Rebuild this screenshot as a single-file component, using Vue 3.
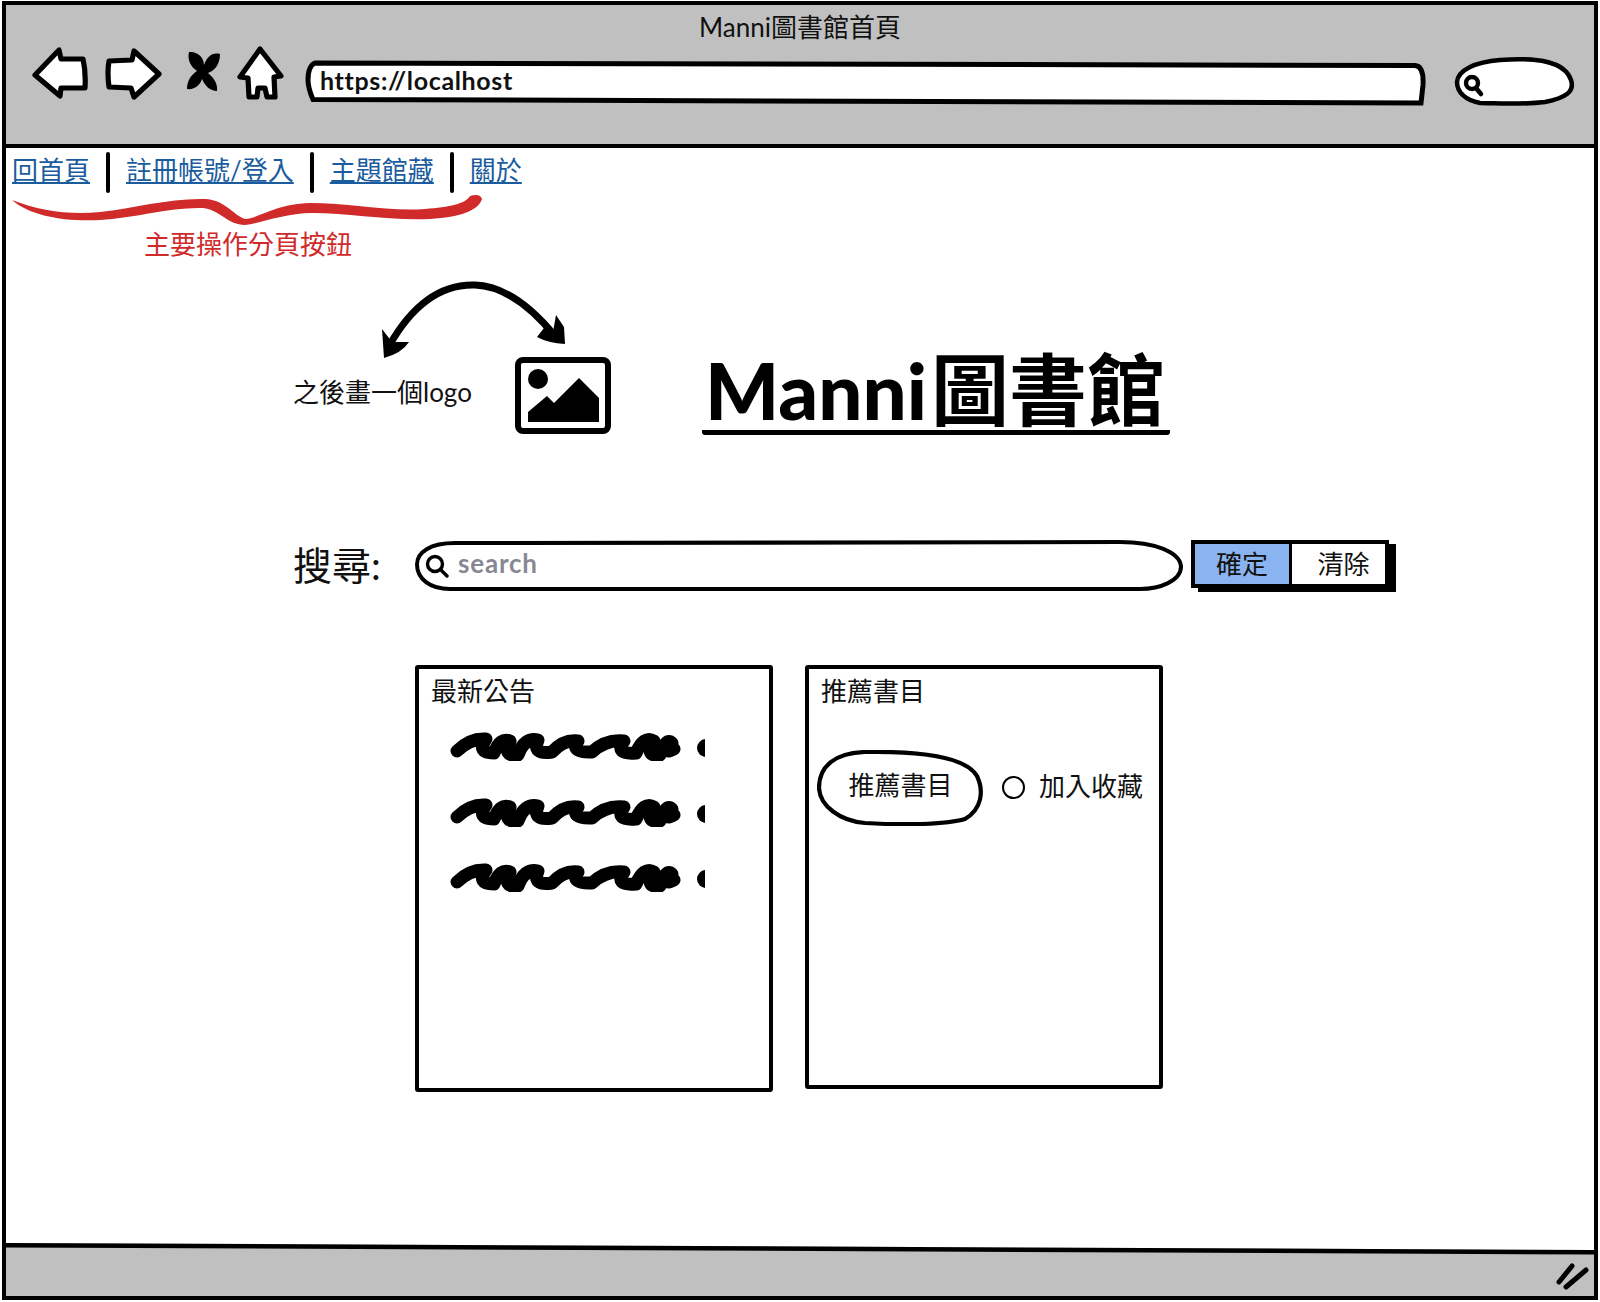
<template>
  <div class="frame">
    <header class="chrome">
      <div class="win-title">Manni圖書館首頁</div>
      <div class="toolbar">
        <svg class="ic-back" width="57" height="63" viewBox="31 45 57 63">
          <path d="M59 50 L35 75 L60 96 L61 88 L85 88 Q86 72 83 59 L61 59 Z" fill="#fff" stroke="#000" stroke-width="5.2" stroke-linejoin="round" />
        </svg>
        <svg class="ic-fwd" width="58" height="63" viewBox="105 45 58 63">
          <path d="M134 51 L159 74 L134 97 L131 88 L109 87 Q107 72 109 61 L132 60 Z" fill="#fff" stroke="#000" stroke-width="5.2" stroke-linejoin="round" />
        </svg>
        <svg class="ic-stop" width="34" height="63" viewBox="186 45 34 63">
          <path d="M189 52 C198 51 204 58 204 65 C207 57 212 52 220 54 C220 65 214 71 208 73 C214 78 218 84 217 91 C210 91 205 86 202 79 C200 85 195 90 187 89 C187 81 191 75 197 71 C191 67 187 60 189 52 Z" fill="#000" />
        </svg>
        <svg class="ic-home" width="48" height="63" viewBox="236 45 48 63">
          <path d="M260 49 L240 77 L248 78 L249 97 L257 97 L258 88 L265 88 L267 97 L275 97 L274 77 L281 76 Z" fill="#fff" stroke="#000" stroke-width="5.2" stroke-linejoin="round" />
        </svg>
        <div class="url">
          <svg class="sketch" viewBox="305 45 1122 63" preserveAspectRatio="none">
            <path d="M315 63 L1415 65.5 Q1424 66 1423 85 L1421 103 L313 99.5 Q308 88 308 80 Q308 66 315 63 Z" fill="#fff" stroke="#000" stroke-width="5" />
          </svg>
          <span class="url-text">https://localhost</span>
        </div>
        <svg class="ic-mini" width="123" height="63" viewBox="1453 45 123 63">
          <path d="M1500 60 C1540 57 1565 62 1571 80 C1575 92 1565 98 1545 102 C1520 105 1495 103 1480 103 C1465 100 1457 92 1457 82 C1458 70 1475 62 1500 60 Z" fill="#fff" stroke="#000" stroke-width="4.5" />
          <circle cx="1472" cy="83" r="6" fill="none" stroke="#000" stroke-width="4.4" />
          <path d="M1476 88 L1481 94" stroke="#000" stroke-width="4.6" stroke-linecap="round" />
        </svg>
      </div>
    </header>

    <main class="content">
      <nav class="nav">
        <template v-for="(item, i) in navItems" :key="item">
          <i v-if="i" class="sep"></i>
          <a href="#" class="nav-link" @click.prevent>{{ item }}</a>
        </template>
      </nav>

      <svg class="brace" width="475" height="32" viewBox="10 193 475 32">
        <path d="M12 200 C40 211 70 215 100 212 C135 208 170 198 205 199 C225 200 232 214 245 219 C260 218 275 204 310 203 C350 203 390 212 425 209 C450 207 465 204 470 196 Q480 193 482 199 C478 211 460 217 430 219 C390 221 350 213 312 213 C285 213 262 223 245 225 C228 225 220 210 203 208 C170 207 135 218 100 220 C65 222 30 216 12 200 Z" fill="#d02a2a" />
      </svg>
      <div class="note">主要操作分頁按鈕</div>

      <section class="logo-row">
        <svg class="arrows" width="190" height="84" viewBox="380 278 190 84">
          <path d="M389 346 C415 300 445 284 475 285 C505 286 532 308 555 336" fill="none" stroke="#000" stroke-width="7" />
          <path d="M382 329 L392 342 L409 342 Q402 353 384 358 Z M556 315 L564 327 L565 344 Q548 343 537 337 L544 328 L553 332 Z" fill="#000" />
        </svg>
        <span class="logo-note">之後畫一個logo</span>
        <svg class="logo-img" width="96" height="77" viewBox="515 357 96 77">
          <rect x="518" y="360" width="90" height="71" rx="5" fill="#fff" stroke="#000" stroke-width="6" />
          <ellipse cx="538" cy="379" rx="10" ry="10" fill="#000" />
          <path d="M528 412 L547 396 L554 403 L579 378 L599 398 L599 422 L528 422 Z" fill="#000" />
        </svg>
        <h1 class="brand"><span class="brand-latin">Manni</span>圖書館</h1>
      </section>

      <section class="search-row">
        <label class="search-label">搜尋:</label>
        <div class="search-box">
          <svg class="sketch" viewBox="415 540 768 50" preserveAspectRatio="none">
            <path d="M455 543 L1120 542 C1155 542 1180 552 1181 566 C1181 580 1160 588 1140 588 L450 588 C430 588 417 578 417 564 C417 552 430 543 455 543 Z" fill="#fff" stroke="#000" stroke-width="4" />
          </svg>
          <svg class="search-ic" width="24" height="24" viewBox="0 0 24 24">
            <circle cx="10" cy="10" r="7.5" fill="none" stroke="#000" stroke-width="3.4" />
            <path d="M15.5 15.5 L22 22" stroke="#000" stroke-width="3.4" stroke-linecap="round" />
          </svg>
          <span class="placeholder">search</span>
        </div>
        <div class="btns">
          <button class="btn btn-on">確定</button>
          <button class="btn btn-off">清除</button>
        </div>
      </section>

      <section class="panels">
        <article class="panel panel-news">
          <h3 class="panel-title">最新公告</h3>
          <div class="scribbles">
            <svg v-for="n in 3" :key="n" class="scribble" width="255" height="32" viewBox="0 0 255 32">
              <path d="M7 22 Q20 9 36 10 Q26 24 44 24 Q50 8 60 12 Q52 28 68 26 Q74 8 88 11 Q82 26 102 23 Q114 10 128 12 Q120 24 142 23 Q156 10 174 12 Q164 26 186 24 Q194 6 204 12 Q194 28 210 26 Q216 8 222 14 Q212 26 224 20" fill="none" stroke="#000" stroke-width="13" stroke-linecap="round" stroke-linejoin="round" />
              <ellipse cx="256" cy="19" rx="9" ry="9" fill="#000" />
            </svg>
          </div>
        </article>
        <article class="panel panel-rec">
          <h3 class="panel-title">推薦書目</h3>
          <div class="rec-row">
            <div class="pill">
              <svg class="sketch" viewBox="817 749 167 76" preserveAspectRatio="none">
                <path d="M865 751 C920 750 965 755 977 775 C984 790 982 808 965 818 C945 824 900 824 865 822 C840 820 820 805 819 787 C819 765 835 752 865 751 Z" fill="#fff" stroke="#000" stroke-width="4.2" />
              </svg>
              <span class="pill-text">推薦書目</span>
            </div>
            <span class="radio"></span>
            <span class="radio-text">加入收藏</span>
          </div>
        </article>
      </section>
    </main>

    <footer class="status">
      <svg class="status-line" viewBox="0 0 1588 12" preserveAspectRatio="none">
        <polygon points="0,0 1588,0 1588,7" fill="#fff" />
        <polygon points="0,0 1588,7 1588,11.5 0,4.5" fill="#000" />
      </svg>
      <svg class="grip" width="34" height="28" viewBox="0 0 34 28">
        <path d="M3 20 L16 4 M10 25 L30 8" fill="none" stroke="#000" stroke-width="5" stroke-linecap="round" />
      </svg>
    </footer>
  </div>
</template>

<script setup>
const navItems = ['回首頁', '註冊帳號/登入', '主題館藏', '關於']
</script>

<style>
html, body { margin: 0; background: #fff; }
</style>

<style scoped>
.frame {
  box-sizing: border-box;
  width: 1596px;
  height: 1299px;
  margin: 1px 2px 2px;
  border: 4px solid #000;
  background: #fff;
  display: flex;
  flex-direction: column;
  font-family: Lato, "Noto Sans CJK TC", sans-serif;
  color: #111;
  font-size: 26px;
}
.chrome {
  box-sizing: border-box;
  height: 143px;
  flex: none;
  background: #c0c0c0;
  border-bottom: 4px solid #000;
  padding-top: 5px;
}
.win-title {
  height: 34px;
  line-height: 34px;
  text-align: center;
}
.toolbar {
  display: flex;
  height: 63px;
  margin-top: 1px;
  padding-left: 25px;
}
.ic-fwd { margin-left: 17px; }
.ic-stop { margin-left: 23px; }
.ic-home { margin-left: 16px; }
.ic-mini { margin-left: 26px; }
.url {
  position: relative;
  width: 1122px;
  margin-left: 21px;
  display: flex;
  align-items: center;
  padding: 6px 0 0 15px;
  box-sizing: border-box;
}
.url-text { position: relative; font-weight: 700; letter-spacing: 0.65px; font-size: 25px; }
.sketch {
  position: absolute;
  inset: 0;
  width: 100%;
  height: 100%;
}
.content { flex: 1; min-height: 0; }
.nav {
  display: flex;
  align-items: center;
  gap: 16px;
  height: 41px;
  padding: 4px 0 0 6px;
}
.nav-link { color: #1a5c9e; line-height: 37px; margin-bottom: 4px; }
.sep {
  width: 4px;
  height: 41px;
  background: #000;
  border-radius: 2px;
}
.brace { display: block; margin-left: 4px; }
.note {
  margin: 4px 0 0 138px;
  height: 30px;
  line-height: 30px;
  color: #d02a2a;
}
.logo-row {
  position: relative;
  display: flex;
  align-items: center;
  height: 77px;
  margin-top: 98px;
  padding-left: 287px;
}
.arrows { position: absolute; left: 374px; top: -79px; }
.logo-note { width: 222px; flex: none; margin-bottom: 10px; }
.logo-img { flex: none; }
.brand {
  margin: 0 0 0 91px;
  width: 468px;
  height: 78px;
  box-sizing: border-box;
  padding-left: 3px;
  border-bottom: 5px solid #000;
  border-radius: 0 0 3px 3px;
  font-size: 78px;
  line-height: 67px;
  font-weight: 700;
  color: #000;
  white-space: nowrap;
}
.brand-latin { font-weight: 900; margin-right: 4px; }
.search-row {
  display: flex;
  height: 51px;
  margin-top: 106px;
  padding-left: 287px;
}
.search-label {
  width: 122px;
  flex: none;
  font-size: 39px;
  line-height: 51px;
}
.search-box {
  position: relative;
  width: 768px;
  flex: none;
  display: flex;
  align-items: center;
  padding-left: 10px;
  box-sizing: border-box;
}
.search-ic { position: relative; flex: none; }
.placeholder {
  position: relative;
  margin: 0 0 6px 9px;
  color: #888895;
  font-weight: 700;
  font-size: 26px;
  letter-spacing: 0.8px;
}
.btns {
  display: flex;
  width: 198px;
  height: 48px;
  box-sizing: border-box;
  margin-left: 8px;
  border: 4px solid #000;
  box-shadow: 7px 4px 0 #000;
  background: #fff;
}
.btn {
  flex: 1;
  padding: 0 0 4px;
  border: 0;
  background: #fff;
  font: inherit;
  color: #111;
}
.btn-off { padding-left: 10px; }
.btn-on {
  flex: none;
  width: 94px;
  padding-right: 0;
  background: #8ab4ef;
  border-right: 3px solid #000;
  box-sizing: content-box;
}
.panels {
  display: flex;
  align-items: flex-start;
  gap: 32px;
  margin-top: 74px;
  padding-left: 409px;
}
.panel {
  box-sizing: border-box;
  width: 358px;
  border: 4px solid #000;
  border-radius: 3px;
  padding: 4px 12px 0;
}
.panel-news { height: 427px; }
.panel-rec { height: 424px; }
.panel-title {
  margin: 0;
  font-size: 26px;
  font-weight: 400;
  line-height: 34px;
  height: 34px;
  padding-top: 1px;
}
.scribbles {
  display: flex;
  flex-direction: column;
  gap: 33.5px;
  margin: 21px 0 0 19px;
}
.scribble { display: block; }
.rec-row {
  display: flex;
  align-items: center;
  margin: 42px 0 0 -4px;
}
.pill {
  position: relative;
  width: 167px;
  height: 76px;
  flex: none;
  display: flex;
  align-items: center;
  justify-content: center;
  padding-bottom: 10px;
  box-sizing: border-box;
}
.pill-text { position: relative; }
.radio {
  box-sizing: border-box;
  width: 23px;
  height: 23px;
  margin: 0 0 2px 18px;
  border: 2px solid #000;
  border-radius: 50%;
  flex: none;
}
.radio-text { margin: 0 0 8px 14px; white-space: nowrap; }
.status {
  position: relative;
  flex: none;
  height: 53px;
  background: #c0c0c0;
}
.status-line {
  position: absolute;
  left: 0;
  top: 0;
  width: 100%;
  height: 12px;
}
.grip {
  position: absolute;
  right: 4px;
  bottom: 6px;
}
</style>
